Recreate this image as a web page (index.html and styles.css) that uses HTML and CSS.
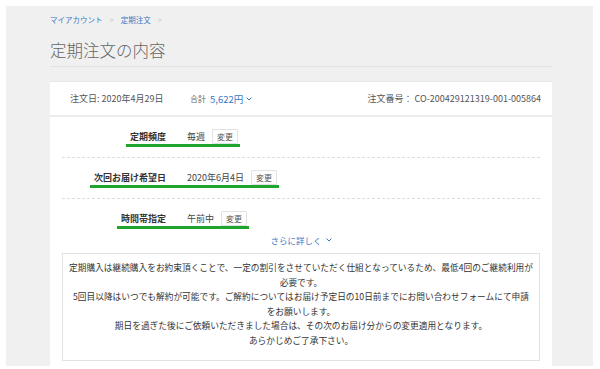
FILE: index.html
```html
<!DOCTYPE html>
<html lang="ja">
<head>
<meta charset="utf-8">
<link rel="stylesheet" href="styles.css">
</head>
<body>
<div class="panel">
  <nav class="crumbs">
    <a class="crumb">マイアカウント</a><span class="sep">&gt;</span><a class="crumb">定期注文</a><span class="sep">&gt;</span>
  </nav>
  <h1 class="title">定期注文の内容</h1>
  <div class="card">
    <div class="card-head">
      <div class="date">注文日: 2020年4月29日</div>
      <div class="total"><span class="total-label">合計</span><span class="total-value">5,622円</span><svg class="chev" width="6" height="4" viewBox="0 0 6 4"><path d="M0.6 0.6 L3 3 L5.4 0.6" fill="none" stroke="#3b78c4" stroke-width="1"/></svg></div>
      <div class="order-no">注文番号： CO-200429121319-001-005864</div>
    </div>
    <div class="card-body">
      <div class="row dashed">
        <div class="label">定期頻度</div>
        <div class="value">毎週<span class="btn">変更</span></div>
      </div>
      <div class="row dashed">
        <div class="label">次回お届け希望日</div>
        <div class="value">2020年6月4日<span class="btn">変更</span></div>
      </div>
      <div class="row last">
        <div class="label">時間帯指定</div>
        <div class="value">午前中<span class="btn">変更</span></div>
      </div>
      <div class="more">さらに詳しく<svg class="chev" width="6" height="4" viewBox="0 0 6 4"><path d="M0.6 0.6 L3 3 L5.4 0.6" fill="none" stroke="#3b78c4" stroke-width="1"/></svg></div>
      <div class="notice">
        定期購入は継続購入をお約束頂くことで、一定の割引をさせていただく仕組となっているため、最低4回のご継続利用が<br>
        必要です。<br>
        5回目以降はいつでも解約が可能です。ご解約についてはお届け予定日の10日前までにお問い合わせフォームにて申請<br>
        をお願いします。<br>
        期日を過ぎた後にご依頼いただきました場合は、その次のお届け分からの変更適用となります。<br>
        あらかじめご了承下さい。
      </div>
    </div>
  </div>
</div>
</body>
</html>
```
FILE: styles.css
```css
html, body {
  margin: 0;
  padding: 0;
  background: #ffffff;
}
body {
  font-family: "Noto Sans CJK JP", "Noto Sans", sans-serif;
  color: #555;
}
.panel {
  margin: 6px 0 0 6px;
  width: 587px;
  height: 360px;
  background: #f0f0f0;
  padding: 9px 0 0 44px;
  box-sizing: border-box;
  overflow: hidden;
}
.crumbs {
  display: flex;
  align-items: center;
  font-size: 7.5px;
  line-height: 10px;
  height: 10px;
}
.crumb {
  color: #3b78c4;
}
.sep {
  color: #c4c4c4;
  margin: 0 7px;
}
.title {
  margin: 15px 0 0 0;
  font-size: 16.5px;
  line-height: 20px;
  font-weight: 300;
  color: #666;
  width: 502px;
  padding-bottom: 6px;
  border-bottom: 1px solid #e3e3e3;
}
.card {
  margin-top: 14px;
  width: 502px;
  background: #fff;
  border-top: 1px solid #e6e6e6;
  height: 300px;
}
.card-head {
  display: flex;
  align-items: center;
  height: 33px;
  padding: 0 11px 0 20px;
  font-size: 9px;
  border-bottom: 2px solid #ebebeb;
}
.date {
  width: 120px;
  color: #555;
}
.total {
  display: flex;
  align-items: center;
}
.total-label {
  font-size: 8px;
  color: #666;
  margin-right: 4px;
}
.total-value {
  font-size: 9.5px;
  color: #3b78c4;
  margin-right: 3px;
}
.chev {
  display: block;
}
.order-no {
  margin-left: auto;
  color: #555;
}
.card-body {
  padding: 0 12px;
}
.row {
  display: grid;
  grid-template-columns: 125px auto 1fr;
  padding: 11px 0 10px;
  font-size: 9px;
  color: #444;
}
.row.dashed {
  border-bottom: 1px dashed #dcdcdc;
}
.row.last {
  padding-bottom: 0;
}
.label {
  grid-column: 1;
  justify-self: end;
  display: flex;
  align-items: center;
  height: 16px;
  padding: 0 21px 0 4px;
  font-weight: 700;
  color: #333;
  border-bottom: 3px solid #1ea52d;
}
.value {
  grid-column: 2;
  display: flex;
  align-items: center;
  height: 16px;
  padding-right: 2px;
  border-bottom: 3px solid #1ea52d;
}
.btn {
  margin-left: 7px;
  font-size: 8px;
  line-height: 13px;
  padding: 0 4px;
  border: 1px solid #e2e2e2;
  border-radius: 1px;
  background: #fdfdfd;
  color: #555;
}
.more {
  display: flex;
  align-items: center;
  justify-content: center;
  gap: 4px;
  margin-top: 5px;
  font-size: 8.5px;
  line-height: 12px;
  color: #3b78c4;
}
.notice {
  margin-top: 7px;
  border: 1px solid #e2e2e2;
  padding: 7px 0 12px;
  text-align: center;
  white-space: nowrap;
  font-size: 8.7px;
  line-height: 14.5px;
  color: #333;
}
```
